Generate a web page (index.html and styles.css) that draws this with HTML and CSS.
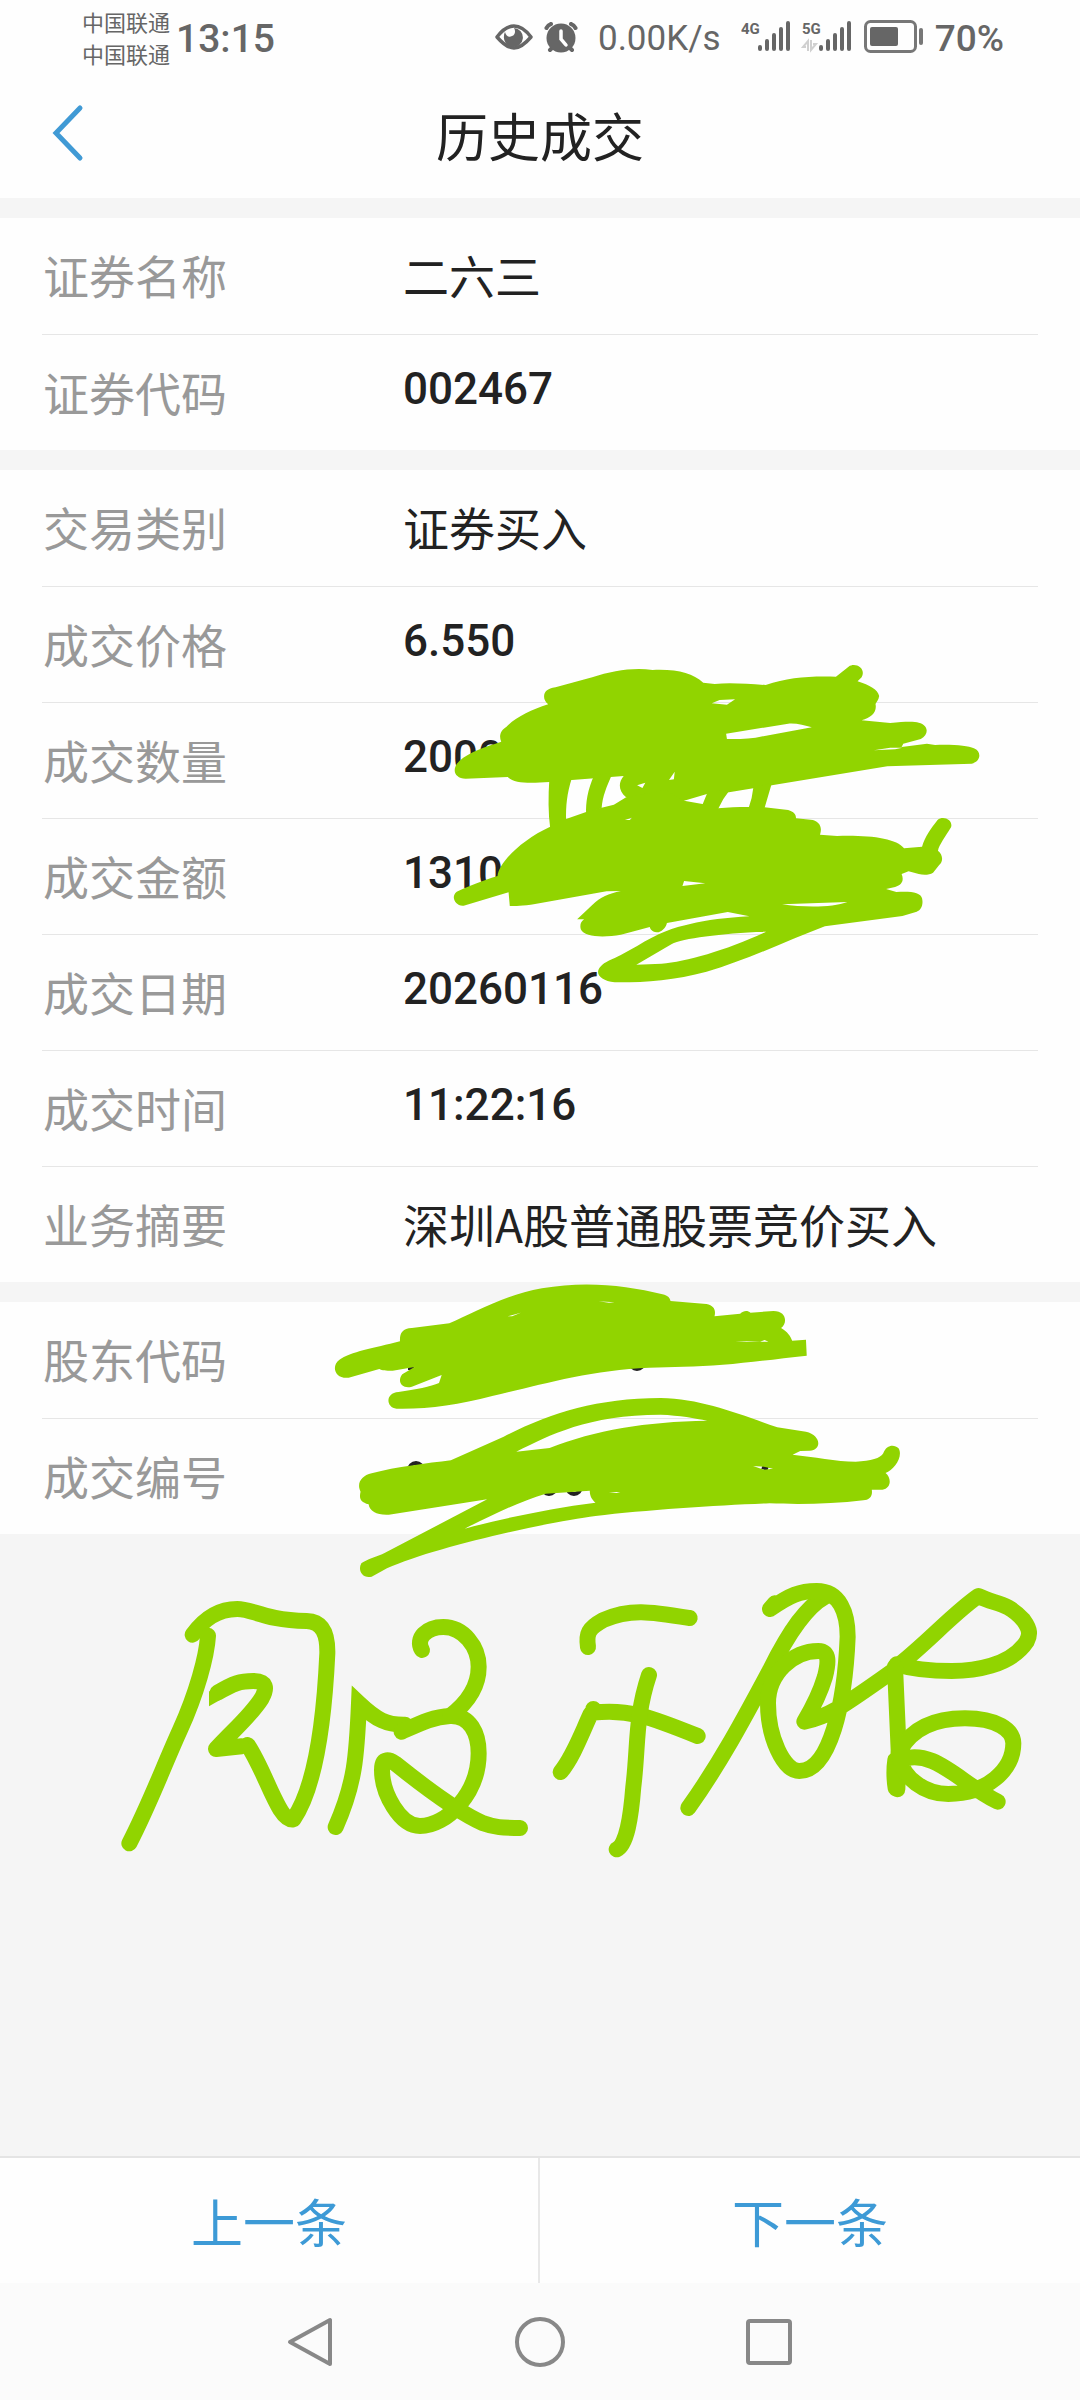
FILE: index.html
```html
<!DOCTYPE html>
<html lang="zh-CN">
<head>
<meta charset="utf-8">
<meta name="viewport" content="width=device-width, initial-scale=1">
<title>历史成交</title>
<link rel="stylesheet" href="styles.css">
</head>
<body>
<div class="status">
  <div class="carriers"><span>中国联通</span><span>中国联通</span></div>
  <span class="clock">13:15</span>
  <div class="indicators">
    <svg width="38" height="32" viewBox="0 0 38 32" aria-hidden="true">
      <path d="M2 16C8 8 13 5 19 5s11 3 17 11c-6 7-11 11-17 11S8 23 2 16z" fill="none" stroke="#666" stroke-width="3.5" stroke-linejoin="round"/>
      <path d="M19 7a9.500 9.500 0 1 1-10 8c0-2 .5-3 1-4 1 4 4 6 7 4 3-1 4-5 2-8z" fill="#666"/>
    </svg>
    <svg width="34" height="32" viewBox="0 0 34 32" aria-hidden="true">
      <g fill="none" stroke="#666" stroke-width="4" stroke-linecap="round"><path d="M2.500 7Q4 4 7 3M31.500 7Q30 4 27 3M6 29l3-3M28 29l-3-3"/></g>
      <circle cx="17" cy="17" r="14.500" fill="#666"/>
      <path d="M17 10v8l5 6" fill="none" stroke="#fff" stroke-width="3.500" stroke-linecap="round"/>
    </svg>
    <span class="speed">0.00K/s</span>
    <svg width="112" height="34" viewBox="0 0 112 34" aria-hidden="true">
      <text class="net" x="0" y="14">4G</text>
      <text class="net" x="61" y="14">5G</text>
      <g stroke="#666" stroke-width="4" stroke-linecap="round">
        <path d="M19 27v2M26 21v8M33 15v14M40 9v20M47 3v26"/>
        <path d="M80 27v2M87 21v8M94 15v14M101 9v20M108 3v26"/>
      </g>
      <path d="M67 31V21l-5 6h3M70 20v10l5-6h-3" fill="none" stroke="#d0d0d0" stroke-width="2"/>
    </svg>
    <svg width="60" height="34" viewBox="0 0 60 34" aria-hidden="true">
      <rect x="1.500" y="1.500" width="50" height="30" rx="5" fill="none" stroke="#777" stroke-width="3"/>
      <rect x="6" y="7" width="28" height="19" rx="2" fill="#666"/>
      <path d="M57 10v13" stroke="#777" stroke-width="4" stroke-linecap="round"/>
    </svg>
    <span class="percent">70%</span>
  </div>
</div>

<header class="header">
  <button class="back" type="button" aria-label="返回">
    <svg width="34" height="58" viewBox="0 0 34 58"><path d="M29 4L5 29l24 25" fill="none" stroke="#409ad5" stroke-width="5" stroke-linecap="round"/></svg>
  </button>
  <h1>历史成交</h1>
</header>

<main class="content">
  <dl class="group">
    <div class="row"><dt>证券名称</dt><dd>二六三</dd></div>
    <div class="row"><dt>证券代码</dt><dd class="num">002467</dd></div>
  </dl>
  <dl class="group">
    <div class="row"><dt>交易类别</dt><dd>证券买入</dd></div>
    <div class="row"><dt>成交价格</dt><dd class="num">6.550</dd></div>
    <div class="row"><dt>成交数量</dt><dd class="num">2000</dd></div>
    <div class="row"><dt>成交金额</dt><dd class="num">1310</dd></div>
    <div class="row"><dt>成交日期</dt><dd class="num">20260116</dd></div>
    <div class="row"><dt>成交时间</dt><dd class="num">11:22:16</dd></div>
    <div class="row"><dt>业务摘要</dt><dd>深圳A股普通股票竞价买入</dd></div>
  </dl>
  <dl class="group">
    <div class="row"><dt>股东代码</dt><dd></dd></div>
    <div class="row"><dt>成交编号</dt><dd></dd></div>
  </dl>

  <!-- Freehand marker layer over the list -->
  <svg class="marker" width="1080" height="1300" viewBox="0 600 1080 1300" aria-hidden="true">
    <g fill="none" stroke="#222" stroke-width="4">
      <circle cx="637" cy="1362" r="7"/><circle cx="416" cy="1470" r="7"/>
      <circle cx="549" cy="1487" r="7"/><circle cx="574" cy="1487" r="7"/><path d="M408 1368h6M762 1467l6 2"/>
    </g>
    <g fill="#91d400" fill-rule="evenodd">
      <g transform="translate(380 640) scale(.40816 .33333)">
        <path d="M402 170C402 155 410 146 430 142L520 112C570 92 620 82 668 90C730 87 765 100 792 128L820 132C860 127 900 132 945 135C1000 112 1050 108 1117 110L1148 80C1165 66 1192 85 1180 112L1170 124C1200 135 1220 150 1223 168C1222 180 1215 188 1214 192C1218 215 1205 232 1180 241L1250 249C1290 244 1310 245 1320 248C1345 255 1345 285 1325 297L1282 311L1278 321L1340 311L1360 315C1410 313 1440 318 1455 325C1475 335 1472 365 1450 371L1243 379L960 436L855 457L803 461L745 482L700 500L603 472C582 450 585 425 597 408L470 420L415 426C370 430 330 432 313 411L210 416C180 415 175 385 195 362C220 335 260 320 297 305C290 285 297 270 310 260C335 230 370 210 412 193C405 185 402 178 402 170Z
          M813 190L832 180L870 178L850 194ZM848 281L1000 251C1020 249 1040 256 1058 262L920 293C895 297 870 297 850 297ZM1210 331L1250 323L1280 323L1262 328ZM630 436L650 428L643 444ZM708 420L722 395L720 418Z"/>
        <path d="M415 415C412 470 412 520 417 565L456 540C455 500 458 460 470 415Z"/>
        <path d="M525 405C508 450 504 490 505 520L543 505C545 470 555 440 570 400Z"/>
        <path d="M803 455L788 500L828 508Q840 475 857 450Z"/>
        <path d="M915 440Q912 475 903 505H942L960 430Z"/>
        <path d="M288 708C290 670 345 600 417 560L456 537L505 516L543 503L573 494L603 472L700 450L745 482L790 492L828 505C870 500 910 501 942 502L1000 510C1015 515 1020 525 1019 535L1055 539C1075 541 1085 560 1078 584L1120 588C1200 585 1265 595 1284 625L1328 620C1335 590 1350 565 1366 540C1380 525 1405 540 1399 562C1385 590 1370 615 1367 632C1380 645 1380 665 1370 675L1355 698C1345 706 1330 705 1320 702L1295 694L1278 702C1284 720 1280 735 1262 741L1240 747L1265 756C1300 753 1325 757 1328 775C1332 795 1325 812 1315 815L1280 828L1090 859C1000 900 900 960 800 995C720 1022 640 1028 575 1027C540 1022 525 1000 540 980C550 965 570 958 590 945L630 918C680 880 720 862 760 852C800 840 850 833 905 829L852 816L703 849C700 865 688 878 678 877C665 875 662 866 661 861L590 884C550 893 500 892 492 868C489 855 492 845 500 838L483 838L520 795C540 770 560 762 590 753L555 754L380 792C350 798 330 798 318 798L315 757L205 797C185 800 172 770 188 755C215 740 250 722 288 708Z
          M628 974L715 912C740 895 840 880 946 875C850 930 750 965 690 971ZM745 723L797 730L741 738ZM985 793L1145 786C1110 803 1040 803 985 793ZM600 540L617 533L612 540Z"/>
      </g>
      <g transform="translate(320 1270) scale(.38265 .33333)">
        <path d="M209 214C208 190 215 175 240 174L338 160C400 130 480 75 580 55C690 32 800 45 895 73C910 77 915 85 916 93L1010 102C1030 107 1035 120 1031 139L1098 131C1107 121 1118 121 1125 128L1185 123C1220 123 1222 160 1205 174C1222 185 1230 200 1234 212L1270 209L1272 257C1150 272 1050 290 950 290L860 293C700 300 560 350 450 378C360 405 280 418 200 416C172 414 170 368 205 366C250 358 290 350 311 339L318 315L240 350C215 358 200 335 215 313L247 291L190 302C170 303 160 300 155 297L75 323C40 328 28 290 50 270C80 245 140 235 209 214Z
          M490 139L525 128L502 139ZM728 94L770 97L755 98ZM1085 213L1150 215L1162 210L1172 215L1115 216Z"/>
        <path d="M342 571L480 500C600 430 720 385 890 384C1000 387 1090 430 1195 472L1270 485C1310 495 1312 540 1280 542L1255 543L1235 554C1290 560 1350 575 1400 575C1440 573 1465 565 1472 550C1480 525 1500 522 1512 535C1525 560 1500 600 1478 609C1495 625 1492 655 1470 659L1442 659C1445 680 1435 690 1420 691C1340 702 1250 704 1175 700C1050 705 850 720 720 738C600 755 300 830 175 895L135 920C110 927 98 900 108 880C120 868 150 860 170 848L437 688L180 734C150 736 130 725 127 703C105 695 102 685 106 665C95 640 108 617 135 610C200 590 280 580 342 571Z
          M513 545C600 495 700 435 890 434C940 436 980 445 1012 452C850 455 720 480 600 534ZM378 776C450 735 520 695 590 671L705 662C705 680 712 690 720 698C600 715 480 745 378 776ZM1132 588L1160 590L1184 596L1160 599ZM755 666L785 666L775 669Z"/>
      </g>
    </g>
    <g fill="none" stroke="#91d400" stroke-width="48" stroke-linecap="round" stroke-linejoin="round">
      <g transform="translate(100 1570) scale(.33333)">
        <path d="M278 194C310 150 350 117 412 117C460 117 490 150 620 153C670 155 683 195 682 250C675 400 655 640 580 748C535 755 500 610 443 525"/>
        <path d="M324 197C320 260 290 370 240 480C190 590 150 700 88 820"/>
        <path d="M353 368C400 340 420 333 460 333C500 333 502 355 485 385C450 440 400 480 348 537L425 529"/>
        <path d="M327 365L345 347L360 390L327 409Z" fill="#91d400" stroke="none"/>
        <path d="M707 771C765 640 770 560 777 400C830 450 860 465 915 464" stroke-linejoin="miter"/>
        <path d="M905 485C960 460 1000 440 1050 438C1110 435 1136 490 1136 550C1136 670 1040 768 960 768C900 768 846 670 846 600C846 560 870 570 885 580C960 640 1080 730 1150 760C1190 775 1220 773 1260 774"/>
        <path d="M966 240C945 205 980 171 1030 171C1090 171 1136 230 1136 290C1136 350 1100 400 1050 438"/>
      </g>
      <g transform="translate(530 1570) scale(.33333)">
        <path d="M174 231C168 190 175 175 220 150C300 115 360 125 479 144"/>
        <path d="M92 606C130 560 155 490 182 432M190 417V425M190 428C290 415 360 440 503 498"/>
        <path d="M357 315C315 440 325 530 310 650C303 740 290 825 260 838"/>
        <path d="M475 714C570 580 640 450 720 300C780 180 830 110 885 80"/>
        <path d="M720 117L735 100M720 117C780 75 810 63 860 63C930 63 953 130 953 200C945 400 900 603 808 603C760 603 714 500 714 400C714 310 790 243 865 243C900 243 895 280 885 320C870 370 850 410 823 455C900 440 950 400 1100 295"/>
        <path d="M1100 290C1190 220 1270 130 1345 78C1400 105 1430 95 1480 150C1502 180 1500 195 1490 215C1440 290 1330 303 1265 303C1200 303 1140 295 1100 283"/>
        <path d="M1095 290L1106 540L1102 658M1096 570Q1090 610 1097 655"/>
        <path d="M1110 540C1150 470 1220 445 1305 445C1400 445 1450 480 1450 520C1450 600 1370 672 1255 672C1180 672 1120 620 1110 570C1210 530 1290 640 1403 695"/>
      </g>
    </g>
  </svg>
</main>

<footer class="pager">
  <button type="button">上一条</button>
  <button type="button">下一条</button>
</footer>

<nav class="system" aria-label="系统导航">
  <button type="button" aria-label="返回"><svg width="54" height="54" viewBox="0 0 54 54"><path d="M46 5v44L6 27z"/></svg></button>
  <button type="button" aria-label="主屏幕"><svg width="54" height="54" viewBox="0 0 54 54"><circle cx="27" cy="27" r="23"/></svg></button>
  <button type="button" aria-label="最近任务"><svg width="54" height="54" viewBox="0 0 54 54"><rect x="6" y="6" width="42" height="42" rx="2"/></svg></button>
</nav>
</body>
</html>
```
FILE: styles.css
```css
* { box-sizing: border-box; }

body {
  margin: 0;
  min-height: 100vh;
  display: flex;
  flex-direction: column;
  background: #f5f5f5;
  color: #222;
  font-family: "Noto Sans CJK SC", sans-serif;
}

button {
  border: 0;
  padding: 0;
  background: none;
  font: inherit;
  color: inherit;
}

svg { display: block; flex: none; }

.status {
  display: flex;
  align-items: center;
  height: 76px;
  padding: 0 76px 2px 82px;
  background: #fefefe;
  color: #666;
}

.carriers {
  display: flex;
  flex-direction: column;
  font-size: 22px;
  line-height: 32px;
}

.clock {
  margin-left: 6px;
  padding-top: 4px;
  font: 500 39px/48px Roboto, sans-serif;
}

.indicators {
  display: flex;
  align-items: center;
  gap: 11px;
  margin-left: auto;
  font-family: Roboto, sans-serif;
  line-height: 48px;
}

.speed { margin: 0 9px; padding-top: 4px; font-size: 35px; }
.percent { padding-top: 4px; font-size: 37px; font-weight: 500; }
.net { font: 700 15px Roboto, sans-serif; fill: #666; }

.header {
  display: grid;
  grid-template-columns: 120px 1fr 120px;
  align-items: center;
  height: 122px;
  padding-bottom: 4px;
  background: #fefefe;
}

.back { justify-self: start; padding: 0 0 4px 51px; }

.header h1 {
  margin: 0;
  text-align: center;
  font-size: 52px;
  font-weight: 400;
  line-height: 64px;
}

.content {
  position: relative;
  flex: 1;
  padding-top: 20px;
  display: flex;
  flex-direction: column;
  gap: 20px;
}

.group {
  margin: 0;
  padding: 0 42px;
  background: #fefefe;
}

.row {
  display: grid;
  grid-template-columns: 360px 1fr;
  align-items: center;
  height: 116px;
  padding: 0 0 4px 1px;
  font-size: 46px;
  line-height: 64px;
}

.row + .row { border-top: 1px solid #e6e6e6; }
.row dt { color: #999; }
.row dd { margin: 0; }

.row .num {
  padding-bottom: 4px;
  font-family: Roboto, sans-serif;
  font-size: 44px;
  font-weight: 500;
}

.marker {
  position: absolute;
  top: 402px;
  left: 0;
  pointer-events: none;
}

.pager {
  display: grid;
  grid-template-columns: 1fr 1fr;
  height: 127px;
  border-top: 2px solid #e4e4e4;
  background: #fefefe;
  color: #3d9ad6;
  font-size: 52px;
}

.pager button:first-child { border-right: 2px solid #e8e8e8; }

.system {
  display: flex;
  justify-content: center;
  align-items: center;
  gap: 175px;
  height: 117px;
  background: #fbfbfb;
}

.system svg {
  fill: none;
  stroke: #888;
  stroke-width: 4;
  stroke-linejoin: round;
}
```
